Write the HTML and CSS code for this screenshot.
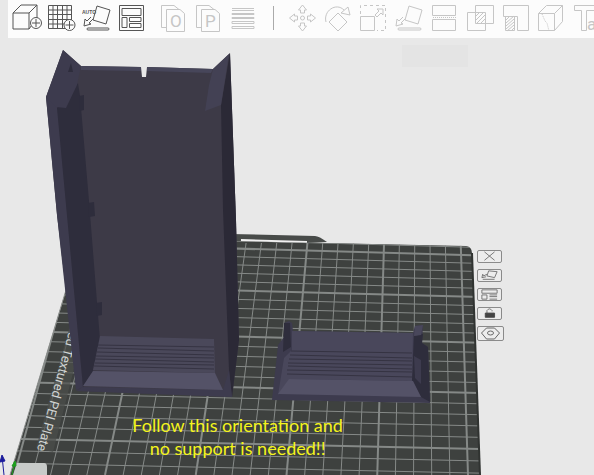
FILE: index.html
```html
<!DOCTYPE html>
<html lang="en">
<head>
    <meta charset="UTF-8">
    <meta name="viewport" content="width=device-width, initial-scale=1.0">
    <title>Prepare plate</title>
    <link rel="stylesheet" href="styles.css">
    <script src="grid.js" defer></script>
</head>
<body>
    <header class="toolbar">
        <div class="tool-group">
            <button class="tool" aria-label="Add model">
                <svg viewBox="0 0 30 36"><path d="M1 13h16v16H1zM1 13l8-8h16l-8 8M25 5v13l-8 11"/><circle class="badge" cx="24" cy="23" r="5.5"/><path d="M24 19v8M20 23h8"/></svg>
            </button>
            <button class="tool" aria-label="Add plate">
                <svg viewBox="0 0 30 36"><path d="M1.5 5.5h23v23h-23zM6 5.5v23M10.5 5.5v23M15.5 5.5v23M20 5.5v23M1.5 10h23M1.5 14.5h23M1.5 19.5h23M1.5 24h23"/><circle class="badge" cx="22.5" cy="25" r="5.5"/><path d="M22.5 21v8M18.5 25h8"/></svg>
            </button>
            <button class="tool" aria-label="Auto orient">
                <svg viewBox="0 0 30 36"><text class="auto" x="0" y="14">AUTO</text><path d="M15 6l13 4-4 14-13-4zM9 17l-4 4-2-2-1 7 7-2-2-1 4-4"/><rect x="5" y="28" width="22" height="2" rx="1"/></svg>
            </button>
            <button class="tool" aria-label="Arrange">
                <svg viewBox="0 0 30 36"><path d="M2.5 5.5h24v25h-24zM5 8.5h19v7H5zM5 17.5h5v10H5zM12.5 17.5H24v4H12.5zM12.5 23.5H24v4H12.5z"/></svg>
            </button>
        </div>
        <div class="tool-group">
            <button class="tool" aria-label="Split to objects" disabled>
                <svg viewBox="0 0 30 36"><path d="M8 27.5H3.5v-22H16l5 4M8.5 9.5H22l4.5 4v18h-18z"/><text class="letter" x="12" y="27">O</text></svg>
            </button>
            <button class="tool" aria-label="Split to parts" disabled>
                <svg viewBox="0 0 30 36"><path d="M8 27.5H3.5v-22H16l5 4M8.5 9.5H22l4.5 4v18h-18z"/><text class="letter" x="12" y="27">P</text></svg>
            </button>
            <button class="tool" aria-label="Variable layer height" disabled>
                <svg viewBox="0 0 30 36"><path d="M4 8.5h22M4 10.5h22M4 13.5h22v1H4zM4 17.5h22v1H4zM4 21.5h22v2H4zM4 26.5h22v2H4z"/></svg>
            </button>
        </div>
        <span class="divider"></span>
        <div class="tool-group wide">
            <button class="tool" aria-label="Move" disabled>
                <svg viewBox="0 0 30 36"><circle cx="16.5" cy="18" r="2"/><path d="M16.5 5l4 5h-2v3h-4v-3h-2zM16.5 31l4-5h-2v-3h-4v3h-2zM3.5 18l5-4v2h3v4h-3v2zM29.5 18l-5-4v2h-3v4h3v2z"/></svg>
            </button>
            <button class="tool" aria-label="Rotate" disabled>
                <svg viewBox="0 0 30 36"><path d="M16 13l9 9-9 9-9-9zM4 22C1 11 14 2 22 10M19 13l7-6 2 8z"/></svg>
            </button>
            <button class="tool" aria-label="Scale" disabled>
                <svg viewBox="0 0 30 36"><path d="M2.5 16.5h14v14h-14zM17 15l4-4-2-2h6v6l-2-2-4 4z"/><path class="dash" d="M2.5 14V5.5h25v25H19"/></svg>
            </button>
            <button class="tool" aria-label="Lay on face" disabled>
                <svg viewBox="0 0 30 36"><path d="M15 6l13 4-4 14-13-4zM9 17l-4 4-2-2-1 7 7-2-2-1 4-4"/><rect x="4" y="28" width="23" height="2" rx="1"/></svg>
            </button>
            <button class="tool" aria-label="Cut" disabled>
                <svg viewBox="0 0 30 36"><path d="M2.5 5.5h23v10h-23zM2.5 19.5h23v11h-23z"/><path class="dots" d="M3 17.5h23"/></svg>
            </button>
            <button class="tool" aria-label="Mesh boolean" disabled>
                <svg viewBox="0 0 30 36"><path d="M1.5 12.5h18v18h-18zM9.5 5.5h18v18h-18zM10 16l3-3M10 20l7-7M11 23l8-8M15 23l4-4"/></svg>
            </button>
            <button class="tool" aria-label="Support painting" disabled>
                <svg viewBox="0 0 30 36"><path d="M1.5 5.5h25v25h-11v-14h-14zM3.5 16.5v14h9v-14M4 20l4-4M4 23l8-7M4 26l8-7M4 29l8-7M5 31l7-6M9 31l3-3"/></svg>
            </button>
            <button class="tool" aria-label="Seam painting" disabled>
                <svg viewBox="0 0 30 36"><path d="M.5 13.5h16v17H.5zM.5 13.5l8-8h16l-8 8M24.5 5.5v16l-8 9"/><path class="dots" d="M4 14l3 7 2 2 2 8"/></svg>
            </button>
            <button class="tool" aria-label="Text" disabled>
                <svg viewBox="0 0 30 36"><path d="M.5 5.5h20v5h-8v20h-5v-20h-7z"/><text class="letter" x="13" y="30">a</text></svg>
            </button>
        </div>
    </header>

    <main class="scene">
        <svg class="view" viewBox="0 38 594 437" role="img" aria-label="Two models on a build plate">
            <defs>
                <clipPath id="plate-clip">
                    <path d="M80 238L466 246Q472 247 472 253L480 475H10L66 290z"/>
                </clipPath>
            </defs>
            <rect class="hint" x="402" y="45" width="66" height="22"/>

            <!-- build plate -->
            <path class="plate-tab" d="M230 234l85 2q4 0 12 6l-20 1-77-2z"/>
            <path class="plate" d="M80 238L466 246Q472 247 472 253L480 475H10L66 290z"/>
            <path class="plate-gap" d="M241 240l66 2"/>
            <g id="grid" clip-path="url(#plate-clip)"></g>
            <path class="plate-edge" d="M10 475L66 290"/>
            <path class="plate-side" d="M472 253L480 475"/>
            <path class="label-bg" d="M70 325l14 4-31 123-17-4z"/>
            <text class="plate-name" transform="translate(37 450) rotate(105)">ed Textured PEI Plate</text>
            <path class="plate-tag" d="M17 463h27q3 0 3 4v8H13z"/>
            <path class="axis-y" d="M12 475l3-13M12 466l3-5 1 5z"/>
            <path class="axis-z" d="M4 475L2 456M0 462l2-7 3 6z"/>

            <!-- case -->
            <path class="back" d="M63 50l18 16 60 1 1 10h4l1-10 66 2 17-16 6 167 3 120-7 57-154-6L57 215 46 97z"/>
            <path class="rim" d="M81 66l60 1v4l-60-1zM147 67l66 2-2 4-64-2z"/>
            <path class="side" d="M46 97l11 6 26 284-7 3L57 215z"/>
            <path class="dark" d="M57 108l21-25 2 13 9 105 11 139-7 31-10 16z"/>
            <path class="side" d="M63 50l18 16-4 19-11 23-10-1-10-10z"/>
            <path class="dark" d="M71 63l2 9h-5zM79 96l5-1v15l-4 1zM88 203l6-1 1 14-6 1zM96 303l6-1v13l-5 1z"/>
            <path class="deep" d="M230 53l6 167 3 120-7 57-3-27-6-160-2-105z"/>
            <path class="fin-back" d="M213 69l16-15-8 51-16 6 4-26z"/>
            <path class="side" d="M83 387l140 3 6-20 3 27-156-6z"/>
            <path class="floor" d="M100 336l114 3 1 34-122-3z"/>
            <path class="rib" d="M98 345l116 2M98 348l116 3M97 352l117 3M96 356l118 2M95 359l119 3M95 363l119 2M94 366l120 3"/>
            <path class="lip" d="M93 371l122 2 8 17-140-4z"/>

            <!-- cover -->
            <path class="side" d="M284 323l5-2 3 2 1 8 120 2 2-7 8-1-1 18 6 4 2 56-158-3 6-55 6-8z"/>
            <path class="dark" d="M284 323h6l1 24-8 5zM414 336l9-2-1 9 6 4 2 55-9-5-9-17z"/>
            <path class="fin" d="M292 331l121 2-1 48-122-2-12 16 6-37 8-8zM415 326l8-1-2 10-7 1z"/>
            <path class="side" d="M414 356l7 4v24l-6-6z"/>
            <path class="rib" d="M291 351l121 2M290 355l122 3M289 359l123 2M288 363l124 2M288 366l124 3M287 370l125 2M287 374l125 3"/>
            <path class="lip" d="M289 379l124 2 8 16-143-3z"/>
        </svg>

        <p class="caption">Follow this orientation and<br>no support is needed!!</p>

        <div class="plate-tools">
            <button class="plate-tool" aria-label="Remove all"><svg viewBox="0 0 24 13"><path d="M6 1l12 10M18 1L6 11"/></svg></button>
            <button class="plate-tool" aria-label="Orient plate"><svg viewBox="0 0 24 13"><path d="M11 1l10 1-3 7-9-2zM9 5L5 7 4 5 3 9l5-1M4 11h14"/></svg></button>
            <button class="plate-tool" aria-label="Arrange plate"><svg viewBox="0 0 24 13"><path d="M3 1h18v4H3zM3 7h6v5H3zM12 7h9M12 9h9M12 12h9"/></svg></button>
            <button class="plate-tool" aria-label="Lock plate"><svg viewBox="0 0 24 13"><path d="M9 6V3q3-4 6 0v1"/><path class="solid" d="M7 6h11v5H7z"/></svg></button>
            <button class="plate-tool" aria-label="Plate settings"><svg viewBox="0 0 24 13"><path d="M8 1h8l5 5-5 6H8L3 6z"/><ellipse cx="12" cy="6" rx="3" ry="2"/></svg></button>
        </div>
    </main>
</body>
</html>
```
FILE: styles.css
```css
body {
    margin: 0;
    background: #e8e8e8;
    font-family: Lato, "Liberation Sans", sans-serif;
    overflow-x: hidden;
}
button {
    padding: 0;
    border: none;
    background: transparent;
    cursor: pointer;
}
svg {
    display: block;
    fill: none;
}

/* toolbar */
.toolbar {
    display: flex;
    height: 38px;
    margin-left: 8px;
    padding-left: 4px;
    background: #fcfcfc;
    overflow: hidden;
}
.tool-group {
    display: flex;
    flex: none;
    gap: 5px;
    margin-right: 11px;
}
.tool-group.wide {
    gap: 6px;
}
.tool {
    width: 30px;
    height: 36px;
    color: #555;
}
.tool:disabled {
    color: #c6c6c6;
    cursor: default;
}
.tool svg {
    width: 30px;
    height: 36px;
    stroke: currentColor;
}
.tool .badge {
    fill: #fcfcfc;
}
.tool text {
    fill: currentColor;
    stroke: none;
}
.auto {
    font-size: 5px;
    font-weight: bold;
}
.letter {
    font-family: Roboto, "Liberation Sans", sans-serif;
    font-size: 17px;
}
.dash {
    stroke-dasharray: 3 3;
}
.dots {
    stroke-dasharray: 1 1;
}
.divider {
    flex: none;
    width: 1px;
    height: 24px;
    margin: 6px 12px 0 4px;
    background: #aaa;
}

/* 3d view */
.scene {
    position: relative;
}
.view {
    width: 100%;
    height: auto;
}
.hint {
    fill: #e4e4e4;
}
.plate {
    fill: #3e413f;
}
.plate-tab {
    fill: #484b49;
}
.plate-gap {
    stroke: #f0f0f0;
    stroke-width: 2;
}
.plate-edge {
    stroke: #8d908e;
}
.plate-side {
    stroke: #303331;
    stroke-width: 2;
}
.grid-line {
    stroke: #868a88;
}
.grid-line.major {
    stroke: #858987;
    stroke-width: 2;
}
.label-bg {
    fill: #4b4e4c;
    opacity: 0.7;
}
.plate-name {
    fill: #d2d5d4;
    font-family: Roboto, sans-serif;
    font-size: 13px;
    text-anchor: end;
}
.plate-tag {
    fill: #c8cbc9;
}
.axis-y {
    fill: #1fa01f;
    stroke: #1fa01f;
}
.axis-z {
    fill: #1c1c9c;
    stroke: #1c1c9c;
}
.back {
    fill: #3d3a47;
}
.side {
    fill: #3d3b4e;
}
.dark {
    fill: #2e2d3c;
}
.deep {
    fill: #2b2936;
}
.rim {
    fill: #47465a;
}
.fin {
    fill: #49475b;
}
.fin-back {
    fill: #434154;
}
.floor {
    fill: #4a485a;
}
.rib {
    stroke: #353342;
}
.lip {
    fill: #545267;
}

.caption {
    position: absolute;
    top: 86%;
    left: 40%;
    margin: 0;
    transform: translateX(-50%);
    color: #f4f41c;
    font-size: 18px;
    line-height: 23px;
    text-align: center;
    white-space: nowrap;
}
.plate-tools {
    position: absolute;
    top: 48%;
    left: 80%;
    display: flex;
    flex-direction: column;
    gap: 6px;
    padding: 2px;
}
.plate-tool {
    box-sizing: border-box;
    width: 25px;
    height: 13px;
    border: 1px solid #8a8a8a;
    border-radius: 2px;
    background: #ececec;
}
.plate-tool:last-child {
    width: 27px;
    height: 15px;
}
.plate-tool svg {
    width: 100%;
    height: 100%;
    stroke: #666;
}
.plate-tool .solid {
    fill: #444;
    stroke: #444;
}
```
FILE: grid.js
```javascript
// Draws the plate grid in perspective, every fifth line is a major one
const grid = document.getElementById("grid");

function addLine(x1, y1, x2, y2, major) {
    const line = document.createElementNS("http://www.w3.org/2000/svg", "line");
    line.setAttribute("x1", x1);
    line.setAttribute("y1", y1);
    line.setAttribute("x2", x2);
    line.setAttribute("y2", y2);
    line.setAttribute("class", major ? "grid-line major" : "grid-line");
    grid.appendChild(line);
}

for (let i = 0; i <= 25; i++) {
    addLine(460.7 - 15.33 * i, 243, 468 - 18.15 * i, 475, i % 5 === 0);
}

for (let i = -2; i <= 21; i++) {
    const y = (448.7 - 6.895 * i) / (1 + 0.01094 * i);
    const slope = 0.022 + 0.0003 * i;
    addLine(0, y - 466 * slope, 480, y + 14 * slope, i % 5 === 0);
}
```
